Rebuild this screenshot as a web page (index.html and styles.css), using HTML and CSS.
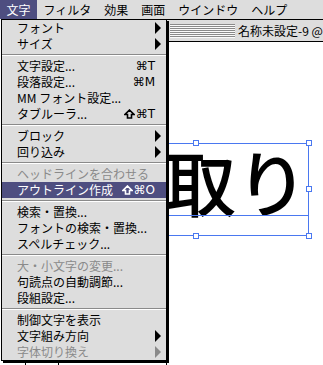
FILE: index.html
```html
<!DOCTYPE html>
<html lang="ja">
<head>
  <meta charset="UTF-8" />
  <title>文字メニュー</title>
  <link rel="stylesheet" href="styles.css">
</head>
<body>
  <div class="screen">
    <div class="menubar">
      <span class="menubar-item active">文字</span>
      <span class="menubar-item">フィルタ</span>
      <span class="menubar-item">効果</span>
      <span class="menubar-item">画面</span>
      <span class="menubar-item">ウインドウ</span>
      <span class="menubar-item">ヘルプ</span>
    </div>

    <div class="doc-window">
      <div class="titlebar">
        <span class="stripes"></span>
        <span class="title">名称未設定-9 @</span>
      </div>
      <div class="canvas">
        <div class="art-text">取り</div>
        <div class="selection">
          <div class="baseline"></div>
          <span class="handle h-tm"></span>
          <span class="handle h-tr"></span>
          <span class="handle h-mr"></span>
          <span class="handle h-bm"></span>
          <span class="handle h-br"></span>
        </div>
      </div>
    </div>

    <span class="tick tick-a"></span>
    <span class="tick tick-b"></span>

    <ul class="menu">
      <li class="item">フォント<span class="arrow"></span></li>
      <li class="item">サイズ<span class="arrow"></span></li>
      <li class="sep"></li>
      <li class="item">文字設定...<span class="key">⌘T</span></li>
      <li class="item">段落設定...<span class="key">⌘M</span></li>
      <li class="item">MM フォント設定...</li>
      <li class="item">タブルーラ...<span class="key"><svg class="shift" viewBox="0 0 11 10" width="11" height="10"><path d="M5.5 1 L10 5.5 H7.5 V9 H3.5 V5.5 H1 Z" /></svg>⌘T</span></li>
      <li class="sep"></li>
      <li class="item">ブロック<span class="arrow"></span></li>
      <li class="item">回り込み<span class="arrow"></span></li>
      <li class="sep"></li>
      <li class="item disabled">ヘッドラインを合わせる</li>
      <li class="item selected">アウトライン作成<span class="key"><svg class="shift" viewBox="0 0 11 10" width="11" height="10"><path d="M5.5 1 L10 5.5 H7.5 V9 H3.5 V5.5 H1 Z" /></svg>⌘O</span></li>
      <li class="sep"></li>
      <li class="item">検索・置換...</li>
      <li class="item">フォントの検索・置換...</li>
      <li class="item">スペルチェック...</li>
      <li class="sep"></li>
      <li class="item disabled">大・小文字の変更...</li>
      <li class="item">句読点の自動調節...</li>
      <li class="item">段組設定...</li>
      <li class="sep"></li>
      <li class="item">制御文字を表示</li>
      <li class="item">文字組み方向<span class="arrow"></span></li>
      <li class="item disabled">字体切り換え<span class="arrow"></span></li>
    </ul>
  </div>
</body>
</html>
```

FILE: styles.css
```css
body {
  margin: 0;
  background-color: #fff;
  font-family: "Noto Sans CJK JP", "DejaVu Sans", sans-serif;
  font-size: 12px;
  color: #000;
}

.screen {
  position: relative;
  width: 323px;
  height: 365px;
  overflow: hidden;
}

/* menu bar */
.menubar {
  display: flex;
  height: 19px;
  line-height: 19px;
  background-color: #dddddd;
}

.menubar-item {
  padding: 0 6.5px;
  white-space: nowrap;
}

.menubar-item.active {
  background-color: #4e4e80;
  color: #fff;
}

/* document window */
.doc-window {
  position: absolute;
  left: 166px;
  top: 19px;
  width: 200px;
  height: 346px;
  border-top: 1px solid #000;
  border-left: 1px solid #000;
  background-color: #fff;
}

.titlebar {
  display: flex;
  align-items: center;
  height: 21px;
  border-bottom: 1px solid #000;
  background-color: #dddddd;
  overflow: hidden;
}

.stripes {
  flex: none;
  width: 65px;
  height: 14px;
  margin-left: 3px;
  margin-right: 3px;
  background: repeating-linear-gradient(#8a8a8a 0 1px, #fafafa 1px 2px);
}

.title {
  white-space: nowrap;
  line-height: 21px;
}

.canvas {
  position: relative;
  height: 323px;
  overflow: hidden;
}

.art-text {
  position: absolute;
  left: -3px;
  top: 102px;
  font-size: 72px;
  line-height: 72px;
  font-weight: 500;
  white-space: nowrap;
}

.selection {
  position: absolute;
  left: -85px;
  top: 101px;
  width: 225px;
  height: 91px;
  border: 1px solid #4a78f0;
}

.baseline {
  position: absolute;
  left: 0;
  right: 0;
  top: 71px;
  border-top: 1px solid #4a78f0;
}

.handle {
  position: absolute;
  width: 4px;
  height: 4px;
  border: 1px solid #4a78f0;
  background-color: #fff;
}

.h-tm { left: 110px; top: -4px; }
.h-tr { right: -4px; top: -4px; }
.h-mr { right: -4px; top: 42px; }
.h-bm { left: 110px; bottom: -4px; }
.h-br { right: -4px; bottom: -4px; }

.tick {
  position: absolute;
  top: 362px;
  width: 1px;
  height: 3px;
  background-color: #000;
}

.tick-a { left: 25px; }
.tick-b { left: 58px; }

/* pull-down menu */
.menu {
  position: absolute;
  left: 1px;
  top: 19px;
  width: 164px;
  margin: 0;
  padding: 0;
  list-style: none;
  border: 1px solid #000;
  background-color: #dddddd;
  box-shadow: 2px 2px 0 #000;
}

.item {
  display: flex;
  justify-content: space-between;
  align-items: center;
  height: 16px;
  line-height: 16px;
  padding: 0 11px 0 15px;
  white-space: nowrap;
}

.item.selected {
  background-color: #4e4e80;
  color: #fff;
}

.item.disabled {
  color: #8a8a8a;
}

.key {
  display: flex;
  align-items: center;
  gap: 1px;
  font-family: "DejaVu Sans", sans-serif;
  font-size: 12px;
}

.shift path {
  fill: none;
  stroke: currentColor;
  stroke-width: 1.6;
  stroke-linejoin: miter;
}

.arrow {
  width: 0;
  height: 0;
  margin-right: -6px;
  border-top: 6px solid transparent;
  border-bottom: 6px solid transparent;
  border-left: 6px solid #000;
}

.disabled .arrow {
  border-left-color: #8a8a8a;
}

.sep {
  height: 6px;
  box-sizing: border-box;
  padding-top: 2px;
}

.sep::before {
  content: "";
  display: block;
  border-top: 1px solid #8a8a8a;
  border-bottom: 1px solid #fff;
}
```
